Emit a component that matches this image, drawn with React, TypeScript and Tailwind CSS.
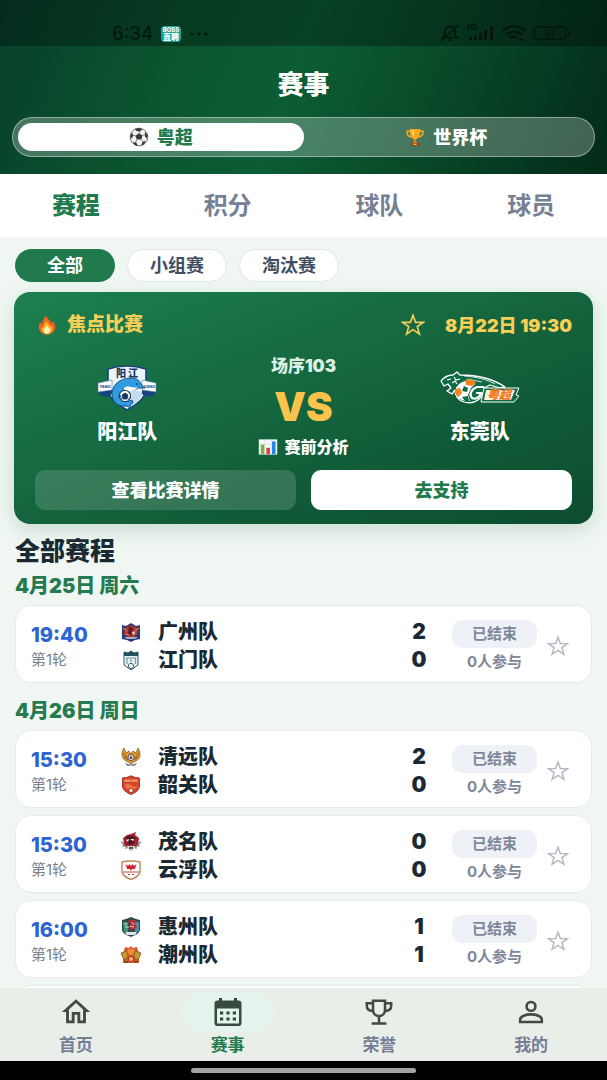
import type { ReactNode } from "react";
import { MdOutlineHome } from "react-icons/md";

interface Team {
  name: string;
  score: number;
  crest: ReactNode;
}

interface Match {
  id: string;
  time: string;
  home: Team;
  away: Team;
}

function StarIcon({ className }: { className?: string }) {
  return (
    <svg viewBox="0 0 24 24" className={className} fill="none" aria-hidden="true">
      <path
        d="M12 2.4 14.6 9.4H22.4L16.3 13.7 18.4 21 12 16.7 5.6 21 7.7 13.7 1.6 9.4H9.4Z"
        stroke="currentColor"
        strokeWidth="1.6"
      />
    </svg>
  );
}

function BallIcon() {
  return (
    <svg viewBox="0 0 24 24" className="h-5 w-5" aria-hidden="true">
      <circle cx="12" cy="12" r="10.6" fill="#f4f4f4" stroke="#555" strokeWidth="1" />
      <path d="M12 7.5 16.2 10.2 14.8 15H9.4L7.6 10.5Z" fill="#3a3a3a" />
      <path d="M7 2.4 12 1.2 16 3 13.5 5.4 9 4.8Z" fill="#3a3a3a" />
      <path d="M19 5.5 22.4 10 21.6 14 19.2 11Z" fill="#3a3a3a" />
      <path d="M1.3 11 3.6 6.5 5 9.5 3.6 14.2Z" fill="#3a3a3a" />
      <path d="M4.5 18.5 8.4 18.2 11 22.8 7.5 21.8Z" fill="#3a3a3a" />
      <path d="M16.2 18 20 16.4 18.2 20.6 14.6 22.2Z" fill="#3a3a3a" />
      <path
        d="M12 7.5 12.4 5M16.2 10.2 19.2 9.2M14.8 15 16.6 18M9.4 15 8 18.4M7.6 10.5 4.6 9.6"
        stroke="#555"
        strokeWidth=".9"
      />
    </svg>
  );
}

function TrophyIcon() {
  return (
    <svg viewBox="0 0 24 24" className="h-5 w-5" aria-hidden="true">
      <path
        d="M6 5H2.2C2.2 9.5 4.3 11.6 8 12M18 5H21.8C21.8 9.5 19.7 11.6 16 12"
        fill="none"
        stroke="#f5a623"
        strokeWidth="1.8"
      />
      <path d="M5.5 2.5H18.5C18.5 10 16.5 14.2 12 15.5 7.5 14.2 5.5 10 5.5 2.5Z" fill="#f7a81b" />
      <path d="M8 4H11V12.5C9 11 8 8 8 4Z" fill="#ffd45e" />
      <path d="M11 15H13L14 19H10Z" fill="#e08a12" />
      <path d="M7 19H17V22.5H7Z" fill="#a8431e" />
      <path d="M10 20H14V21.5H10Z" fill="#f7c04a" />
    </svg>
  );
}

function FireIcon() {
  return (
    <svg viewBox="0 0 24 24" className="h-5 w-5" aria-hidden="true">
      <path
        d="M11 .8C12 4.5 16.5 6 17.4 10.4 18.3 9.8 18.6 8.6 18.4 7.2 21 9.6 22.3 12.5 21.8 15.8 21 20.4 17 23.4 12 23.4S2.8 20.4 2.2 15.8C1.8 12.8 3 10 4.4 8.2 4.6 9.8 5.2 10.8 6.4 11.3 6.2 6.8 8.2 3.4 11 .8Z"
        fill="#f4611e"
      />
      <path
        d="M11.4 7C12 10.2 15.8 11.5 16.4 14.6 17.2 14.2 17.6 13.4 17.8 12.6 20 17.8 16.8 22.6 12 22.6 7.4 22.6 4.4 18.6 5.8 14.2 6.4 15.2 7.2 15.6 8 15.5 7.8 12 9.4 9 11.4 7Z"
        fill="#ffb02e"
      />
      <path
        d="M12 12.2C12.4 14.4 15.8 15.8 16 18.4 16.1 21 14.2 22.6 12 22.6S7.8 21 7.9 18.6C8 16 11.2 14.6 12 12.2Z"
        fill="#fff3b0"
      />
    </svg>
  );
}

function ChartIcon() {
  return (
    <svg viewBox="0 0 24 20" className="h-4 w-5" aria-hidden="true">
      <rect x=".5" y=".5" width="23" height="19" fill="#f5f7f8" />
      <path d="M.5 6.5H23.5M.5 13H23.5M8 .5V19.5M16 .5V19.5" stroke="#cfd8dc" strokeWidth=".7" />
      <rect x="3" y="7" width="4.4" height="12" fill="#7cb342" />
      <rect x="10" y="11" width="4.4" height="8" fill="#e53935" />
      <rect x="17" y="3" width="4.4" height="16" fill="#1e88e5" />
    </svg>
  );
}

function CalendarIcon() {
  return (
    <svg viewBox="0 0 28 28" className="h-7 w-7" fill="currentColor" aria-hidden="true">
      <path
        fillRule="evenodd"
        d="M5 0h3v2.6h12V0h3v2.6h1.5a3 3 0 0 1 3 3V25a3 3 0 0 1-3 3h-21a3 3 0 0 1-3-3V5.6a3 3 0 0 1 3-3H5ZM3 10.5v15h22v-15Z"
      />
      <path d="M6 13.4h3.2v3.2H6zM12.4 13.4h3.2v3.2h-3.2zM18.8 13.4H22v3.2h-3.2zM6 19.4h3.2v3.2H6zM12.4 19.4h3.2v3.2h-3.2zM18.8 19.4H22v3.2h-3.2z" />
    </svg>
  );
}

function HonorIcon() {
  return (
    <svg viewBox="0 0 28 26" className="h-[26px] w-7" fill="none" stroke="currentColor" strokeWidth="2.5" aria-hidden="true">
      <path d="M8 1.8H20V11C20 14.6 17.4 17 14 17S8 14.6 8 11Z" />
      <path d="M8 4.2H1.8V6.8C1.8 10 4.4 12 8.4 12.2M20 4.2H26.2V6.8C26.2 10 23.6 12 19.6 12.2" />
      <path d="M14 17V24M6.6 24.4H21.4" />
    </svg>
  );
}

function PersonIcon() {
  return (
    <svg viewBox="0 0 26 24" className="h-6 w-[26px]" fill="none" stroke="currentColor" strokeWidth="2.6" aria-hidden="true">
      <circle cx="13" cy="6.4" r="4.4" />
      <path d="M2.2 22V19.4C2.2 16.2 8 14.4 13 14.4S23.8 16.2 23.8 19.4V22Z" />
    </svg>
  );
}

function YangjiangCrest() {
  return (
    <svg viewBox="0 0 60 48" className="h-[48px] w-[60px]" aria-hidden="true">
      <path
        d="M11 5Q30-1 49 5V25C48 35 40 40 30 46 20 40 12 35 11 25Z"
        fill="#eaf4fb"
        stroke="#17457f"
        strokeWidth="1.6"
      />
      <path d="M14 28Q22 22 30 25T46 28C45 35 38 39 30 43 22 39 15 35 14 28Z" fill="#c3dcef" />
      <path d="M1 20 15 17V30L10 33 2 31ZM59 20 45 17V30L50 33 58 31Z" fill="#17457f" />
      <path d="M1 19 15 16V26L1 28ZM59 19 45 16V26L59 28Z" fill="#fff" stroke="#4d7aa8" strokeWidth=".6" />
      <text x="8" y="24" fontSize="4" fontWeight="700" fill="#17457f" textAnchor="middle">
        YANG
      </text>
      <text x="52" y="24" fontSize="4" fontWeight="700" fill="#17457f" textAnchor="middle">
        JIANG
      </text>
      <text x="30" y="13" fontSize="10" fontWeight="900" fill="#17365f" textAnchor="middle">
        阳 江
      </text>
      <path
        d="M16 35C12 23 22 14 34 14 40 14 43 17 44 20L48 24 41 24C36 29 31 23 26 26 21 29 21 34 25 37 29 38 33 37 35 36L36 39 33 41 35 45 30 42C23 43 18 40 16 35Z"
        fill="#2f9be0"
        stroke="#17457f"
        strokeWidth=".9"
      />
      <path d="M27 24C32 20 36 25 41 23 37 29 32 26 27 27Z" fill="#fff" />
      <circle cx="40" cy="20" r=".9" fill="#17457f" />
      <circle cx="28" cy="32" r="5.6" fill="#fff" stroke="#17365f" strokeWidth="1" />
      <path d="M28 29 31 31 30 35H26L25 31ZM23 31 24 34 25 36M31 27 33 30M31 36 33 33" fill="#17365f" stroke="#17365f" strokeWidth=".8" />
    </svg>
  );
}

function DongguanLogo() {
  return (
    <svg viewBox="0 0 80 34" className="h-[34px] w-[80px]" aria-hidden="true">
      <path
        d="M1 10C5 5 9 4 13 4L17 1 20 4C38 4 52 7 65 16L60 17 50 14 44 17 54 19 43 22C40 31 31 33 24 31 18 29 15 24 15 19L12 23 7 20 11 17 8 13 4 15Z"
        fill="#0d6b45"
        stroke="#fff"
        strokeWidth="1.3"
        strokeLinejoin="round"
      />
      <path d="M7 9 11 8M14 6 16 9 20 8M12 12 15 10 17 13" stroke="#fff" strokeWidth="1.2" fill="none" />
      <path d="M24 5C36 6 46 8 55 13M27 8 42 11" stroke="#fff" strokeWidth=".8" fill="none" />
      <path d="M16 17C20 9 30 8 35 13L31 17 28 24 30 30C20 31 14 25 16 17Z" fill="#fff" />
      <path d="M25 9Q32 7 36 12L32 15 26 14ZM15 18 20 17 22 22 18 26Q14 22 15 18Z" fill="#f58220" />
      <path d="M24 15 28 17 27 21 22 20ZM22 26 28 25 29 30 25 30Z" fill="#0d6b45" />
      <path d="M44 16H37C31 18 29 24 32 27 36 29 40 26 41 22H36" fill="none" stroke="#fff" strokeWidth="2.2" />
      <path d="M44 17H79L76 24 79 25 74 31H41Z" fill="#0d6b45" stroke="#fff" strokeWidth="1" />
      <path d="M46 19H75L71 29H44Z" fill="#fdf1e4" />
      <text x="59" y="28" fontSize="12" fontWeight="900" fontStyle="italic" fill="#f07818" textAnchor="middle">
        粤超
      </text>
    </svg>
  );
}

const crests = {
  guangzhou: (
    <>
      <path d="M1 3 5 4 10 1 15 4 19 3V17L14 18 10 20 6 18 1 17Z" fill="#243a78" />
      <path d="M4 6 10 3 16 6 17 12 10 17 3 12Z" fill="#b5382f" />
      <path d="M8 4 12 6 13 11 10 14 7 11Z" fill="#5f1d35" />
      <circle cx="12.5" cy="11" r="1.8" fill="#e9b9a6" />
      <path d="M3 15H17L14 17H6Z" fill="#a9adca" />
      <path d="M2 6 6 9M18 6 14 9M4 12 8 13" stroke="#e87843" strokeWidth="1.2" />
    </>
  ),
  jiangmen: (
    <>
      <path d="M3 2 7 3 10 1 13 3 17 2V15L10 20 3 15Z" fill="#eaf2f2" stroke="#2e5963" strokeWidth="1" />
      <path d="M3 2 7 3 10 1 13 3 17 2V6H3Z" fill="#24505b" />
      <path d="M5 8H15M6 8V14M10 9V12M14.5 8V14" stroke="#6b9aa8" strokeWidth="1.2" />
      <circle cx="10" cy="16" r="2.6" fill="#fff" stroke="#2e5963" />
    </>
  ),
  qingyuan: (
    <>
      <path d="M3 1C-1 7 1 14 8 15L10 18 12 15C19 14 21 7 17 1L15 6 12 4 10 7 8 4 5 6Z" fill="#e39a25" stroke="#6f5130" strokeWidth=".7" />
      <path d="M2 6 6 11M18 6 14 11M3 10 7 13M17 10 13 13" stroke="#7a521d" strokeWidth=".9" />
      <circle cx="10" cy="10.5" r="3" fill="#fff" stroke="#49415e" />
      <path d="M10 9 11.5 10 11 12H9L8.5 10Z" fill="#49415e" />
      <path d="M4 16 8 17 10 19 12 17 16 16 14 19H6Z" fill="#8f86ac" />
    </>
  ),
  shaoguan: (
    <>
      <path d="M1.5 3Q6 3 10 .8 14 3 18.5 3V11C18.5 15 14 18 10 19.5 6 18 1.5 15 1.5 11Z" fill="#d6442f" stroke="#a9352c" />
      <path d="M4 7V5H6V7M7 7V5H9V7M11 7V5H13V7M14 7V5H16V7" stroke="#f3b97a" fill="none" />
      <path d="M3 10Q7 7 10 10T17 10L14 14H6Z" fill="#e8743f" />
      <circle cx="10" cy="15.5" r="2.1" fill="#fff0dc" stroke="#8c2620" strokeWidth=".7" />
    </>
  ),
  maoming: (
    <>
      <path d="M2 6 6 3 10 2 15 0 14 3 18 6 17 13 10 19 3 13Z" fill="#a81f2c" />
      <path d="M5 5Q10 2 15 6L12 8 14 11 9 13 6 11Z" fill="#4a1820" />
      <path d="M9 7 13 7 12 9ZM5 8 8 7 7 10Z" fill="#fff" />
      <path d="M0 10 3 12 2 14 5 14 5 17M20 10 17 12 18 14 15 14 15 17" stroke="#777" strokeWidth="1.1" fill="none" />
      <path d="M6 14 14 14 13 17 10 19 7 17Z" fill="#ddd" />
      <path d="M8 15 12 17M12 15 8 17" stroke="#333" />
    </>
  ),
  yunfu: (
    <>
      <path d="M1 2Q10 0 19 2V12C18 16 14 18 10 19.5 6 18 2 16 1 12Z" fill="#fff" stroke="#b9875d" strokeWidth="1.4" />
      <path d="M4.5 4 7 6 8.5 4 10 6 11.5 4 13 6 15.5 4 14 9 11 9 10 11 9 9 6 9Z" fill="#cf2232" />
      <path d="M2 12H18" stroke="#c24b42" />
      <path d="M7 14.5H9M11 14.5H13" stroke="#c24b42" />
    </>
  ),
  huizhou: (
    <>
      <path d="M1 3 5 2 10 0 15 2 19 3V13C18 17 14 18 10 20 6 18 2 17 1 13Z" fill="#31484f" />
      <path d="M2 5H7V16L3 14Z" fill="#3a9772" />
      <path d="M14 5H18V14L14 16Z" fill="#528db1" />
      <path d="M7 3H15L14 7 16 10 12 13 8 12 9 8Z" fill="#b22e33" />
      <path d="M3 7H6M4 10H8M11 5 13 8M9 9 13 10" stroke="#e7e4dc" strokeWidth=".9" />
      <path d="M4 15H16L14 18H6Z" fill="#dfe6ea" />
    </>
  ),
  chaozhou: (
    <>
      <path d="M4 2 8 3 10 1 12 3 16 2 17 6 20 9 18 13 18 18H2V13L0 9 3 6Z" fill="#d9542b" />
      <path d="M0 8 6 6 7 12 3 15ZM20 8 14 6 13 12 17 15Z" fill="#c89832" stroke="#735e25" strokeWidth=".7" />
      <path d="M6 5Q10 2 14 5L12 10H8Z" fill="#f08a35" />
      <circle cx="10" cy="14" r="2.6" fill="#f4b772" stroke="#a32e22" />
      <path d="M3 17H7M13 17H17" stroke="#71431d" strokeWidth="1.4" />
    </>
  ),
};

const days: { date: string; matches: Match[] }[] = [
  {
    date: "4月25日 周六",
    matches: [
      {
        id: "gz-jm",
        time: "19:40",
        home: { name: "广州队", score: 2, crest: crests.guangzhou },
        away: { name: "江门队", score: 0, crest: crests.jiangmen },
      },
    ],
  },
  {
    date: "4月26日 周日",
    matches: [
      {
        id: "qy-sg",
        time: "15:30",
        home: { name: "清远队", score: 2, crest: crests.qingyuan },
        away: { name: "韶关队", score: 0, crest: crests.shaoguan },
      },
      {
        id: "mm-yf",
        time: "15:30",
        home: { name: "茂名队", score: 0, crest: crests.maoming },
        away: { name: "云浮队", score: 0, crest: crests.yunfu },
      },
      {
        id: "hz-cz",
        time: "16:00",
        home: { name: "惠州队", score: 1, crest: crests.huizhou },
        away: { name: "潮州队", score: 1, crest: crests.chaozhou },
      },
    ],
  },
];

function StatusBar() {
  return (
    <div className="flex h-[46px] items-end justify-between bg-black/30 pr-9 pb-1 pl-28 text-[#04150c]">
      <div className="flex items-center gap-2">
        <span className="text-[19px] leading-4">6:34</span>
        <svg viewBox="0 0 20 16" className="h-4 w-5 rounded bg-[#19a3a0] text-white" fill="currentColor" aria-hidden="true">
          <text x="10" y="6" fontSize="6" fontWeight="800" textAnchor="middle">
            BOSS
          </text>
          <text x="10" y="14" fontSize="8" fontWeight="900" textAnchor="middle">
            直聘
          </text>
        </svg>
        <svg viewBox="0 0 20 4" className="h-1 w-5" fill="currentColor" aria-hidden="true">
          <circle cx="3" cy="2" r="1.6" />
          <circle cx="10" cy="2" r="1.6" />
          <circle cx="17" cy="2" r="1.6" />
        </svg>
      </div>
      <div className="flex items-center gap-[7px]">
        <svg viewBox="0 0 20 18" className="h-[18px] w-5" fill="none" stroke="currentColor" strokeWidth="1.6" aria-hidden="true">
          <path d="M3 13.5H17L15 11V7C15 4 13 2.5 10 2.5S5 4 5 7V11ZM8 16H12M18.5 1 1.5 17" />
        </svg>
        <svg viewBox="0 0 28 18" className="h-[18px] w-7" fill="currentColor" aria-hidden="true">
          <text x="0" y="6" fontSize="7" fontWeight="800">
            HD
          </text>
          <path d="M2 13h3v3H2zM7 12h3v4H7zM12 9h3v7h-3zM17 6h3v10h-3zM23 2h3v14h-3z" />
        </svg>
        <svg viewBox="0 0 24 18" className="h-[18px] w-6" fill="none" stroke="currentColor" strokeWidth="2.4" aria-hidden="true">
          <path d="M1 6.5Q12-2 23 6.5M4.5 10.5Q12 4.5 19.5 10.5M8 13.8Q12 11 15 13.8" />
          <path d="M17 15.5H22" strokeWidth="2" />
        </svg>
        <svg viewBox="0 0 38 14" className="h-3.5 w-[38px]" aria-hidden="true">
          <rect x="1" y="1" width="32" height="12" rx="3.5" fill="none" stroke="currentColor" strokeWidth="1.5" />
          <path d="M35 5H37V9H35Z" fill="currentColor" />
          <text x="17" y="11" fontSize="10" fontWeight="500" fill="currentColor" textAnchor="middle">
            97
          </text>
        </svg>
      </div>
    </div>
  );
}

function FeaturedMatch() {
  return (
    <section className="-mx-px rounded-2xl bg-linear-to-br from-[#1d8050] via-[#14643d] to-[#0c4c2e] px-[21px] pt-5 pb-3.5 text-white shadow-[0_6px_20px_rgba(20,100,60,0.18)]">
      <div className="flex h-[26px] items-center justify-between text-[#f7cf57]">
        <h2 className="flex items-center gap-2.5 pl-0.5 text-[19px] font-black">
          <FireIcon />
          焦点比赛
        </h2>
        <div className="flex items-center gap-5 text-[18px] font-black">
          <button aria-label="收藏比赛">
            <StarIcon className="h-6 w-6" />
          </button>
          <span>8月22日 19:30</span>
        </div>
      </div>

      <div className="mt-4 mb-3 grid grid-cols-3 px-1">
        <div className="flex flex-col items-center pt-2">
          <div className="flex h-[52px] items-center">
            <YangjiangCrest />
          </div>
          <p className="mt-1 text-[20px] leading-7 font-black">阳江队</p>
        </div>
        <div className="flex flex-col items-center">
          <p className="text-[17px] leading-6 font-black text-[#dcefe4]">场序103</p>
          <p className="my-1.5 text-[40px] leading-[46px] font-black text-[#fbc34c]">VS</p>
          <button className="flex items-center gap-1.5 text-[16px] leading-[22px] font-black">
            <ChartIcon />
            赛前分析
          </button>
        </div>
        <div className="flex flex-col items-center pt-2">
          <div className="flex h-[52px] items-center">
            <DongguanLogo />
          </div>
          <p className="mt-1 text-[20px] leading-7 font-black">东莞队</p>
        </div>
      </div>

      <div className="grid grid-cols-2 gap-[15px] text-[18px] font-black">
        <button className="h-10 rounded-[10px] bg-white/15">查看比赛详情</button>
        <button className="h-10 rounded-[10px] bg-white text-[#1f7a4d]">去支持</button>
      </div>
    </section>
  );
}

function TeamRow({ team }: { team: Team }) {
  return (
    <div className="flex h-7 items-center">
      <svg viewBox="0 0 20 20" className="h-5 w-[22px]" aria-hidden="true">
        {team.crest}
      </svg>
      <span className="ml-4 flex-1 text-[20px] font-black">{team.name}</span>
      <span className="w-5 text-center text-[21px] font-black">{team.score}</span>
    </div>
  );
}

function MatchCard({ match }: { match: Match }) {
  return (
    <article className="flex items-center rounded-2xl border border-[#e6ece9] bg-white pt-3 pr-[22px] pb-2 pl-[15px] text-[#1a2a33]">
      <div className="w-[89px]">
        <p className="text-[20px] leading-7 font-extrabold text-[#2d64d3]">{match.time}</p>
        <p className="text-[15px] leading-[22px] text-[#7b8087]">第1轮</p>
      </div>
      <div className="flex-1">
        <TeamRow team={match.home} />
        <TeamRow team={match.away} />
      </div>
      <div className="ml-[23px] w-[85px] text-center text-[15px] font-bold text-[#7e8799]">
        <p className="h-7 rounded-[10px] bg-[#eef1f6] leading-7">已结束</p>
        <p className="mt-1 leading-5">0人参与</p>
      </div>
      <button className="ml-2.5 text-[#b3b8c3]" aria-label="收藏">
        <StarIcon className="h-[22px] w-[22px]" />
      </button>
    </article>
  );
}

const tabs = ["赛程", "积分", "球队", "球员"];
const stages = ["全部", "小组赛", "淘汰赛"];

const navItems = [
  { label: "首页", icon: <MdOutlineHome size={34} /> },
  { label: "赛事", icon: <CalendarIcon /> },
  { label: "荣誉", icon: <HonorIcon /> },
  { label: "我的", icon: <PersonIcon /> },
];

export default function App() {
  return (
    <div className="flex h-screen flex-col overflow-hidden bg-[#f0f7f3] font-['Inter','Noto_Sans_CJK_SC',sans-serif]">
      <header className="bg-linear-[110deg,#07402a_0%,#0b552f_30%,#0c5d34_48%,#084727_72%,#032b1a_100%]">
        <StatusBar />
        <h1 className="pt-5 text-center text-[26px] leading-[38px] font-black text-white">赛事</h1>
        <div className="mx-3 mt-[13px] grid h-10 grid-cols-2 rounded-full border border-white/40 bg-white/25 p-[5px] text-[18px] font-black">
          <button className="flex items-center justify-center gap-2 rounded-full bg-white text-[#1f7a4d]">
            <BallIcon />
            粤超
          </button>
          <button className="flex items-center justify-center gap-2 rounded-full text-white">
            <TrophyIcon />
            世界杯
          </button>
        </div>
        <div className="h-[17px]" />
      </header>

      <nav className="grid h-[63px] shrink-0 grid-cols-4 bg-white text-[24px]">
        {tabs.map((tab, i) => (
          <button key={tab} className={i === 0 ? "font-black text-[#1f7a4d]" : "font-bold text-[#758095]"}>
            {tab}
          </button>
        ))}
      </nav>

      <main className="min-h-0 flex-1 overflow-y-auto px-[15px] pt-3 [scrollbar-width:none]">
        <div className="mb-2.5 flex gap-3 text-[18px] font-bold">
          {stages.map((stage, i) => (
            <button
              key={stage}
              className={
                i === 0
                  ? "h-[33px] w-[100px] rounded-full bg-[#217a4d] text-white"
                  : "h-[33px] w-[100px] rounded-full border border-[#dfe5ea] bg-white text-[#414e62]"
              }
            >
              {stage}
            </button>
          ))}
        </div>

        <FeaturedMatch />

        <h2 className="mt-3 text-[25px] leading-[30px] font-black text-[#1a2a33]">全部赛程</h2>
        {days.map((day, i) => (
          <section key={day.date} className={i === 0 ? "mt-2" : "mt-4"}>
            <h3 className="mb-[7px] text-[20px] leading-6 font-black text-[#267a50]">{day.date}</h3>
            <div className="flex flex-col gap-[7px]">
              {day.matches.map((match) => (
                <MatchCard key={match.id} match={match} />
              ))}
            </div>
          </section>
        ))}
        <div className="mt-[7px] h-5 rounded-t-2xl border border-b-0 border-[#e6ece9] bg-white" />
      </main>

      <nav className="grid h-[73px] shrink-0 grid-cols-4 bg-[#e9eee8]">
        {navItems.map((item, i) => (
          <button
            key={item.label}
            className={
              i === 1
                ? "flex flex-col items-center pt-1 text-[#1f7a4d]"
                : "flex flex-col items-center pt-1 text-[#747f96]"
            }
          >
            <span
              className={
                i === 1
                  ? "flex h-10 w-[92px] items-center justify-center rounded-full bg-[#e5f5ed] text-[#364a3f]"
                  : "flex h-10 w-[92px] items-center justify-center text-[#414a43]"
              }
            >
              {item.icon}
            </span>
            <span className="text-[17px] leading-[26px] font-bold">{item.label}</span>
          </button>
        ))}
      </nav>
      <div className="flex h-[19px] shrink-0 items-center justify-center bg-black">
        <div className="h-[5px] w-[37%] rounded-full bg-[#a3a3a3]" />
      </div>
    </div>
  );
}
